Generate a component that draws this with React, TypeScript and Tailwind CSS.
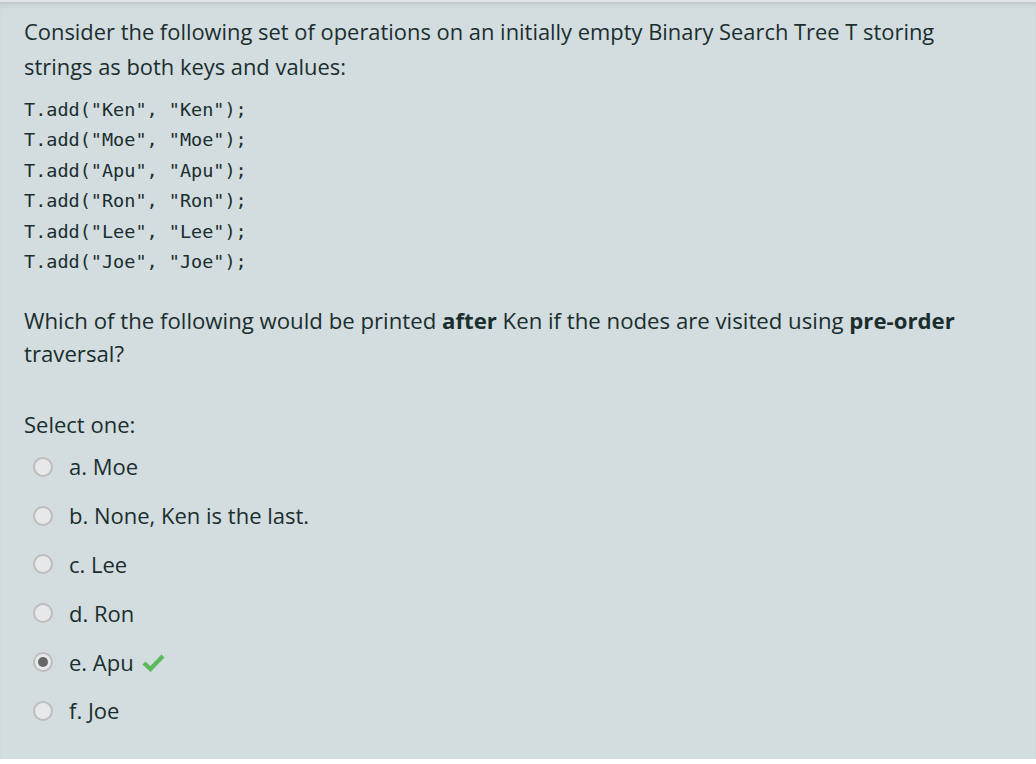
const codeLines = [
  'T.add("Ken", "Ken");',
  'T.add("Moe", "Moe");',
  'T.add("Apu", "Apu");',
  'T.add("Ron", "Ron");',
  'T.add("Lee", "Lee");',
  'T.add("Joe", "Joe");',
]

const options = [
  { label: "a. Moe" },
  { label: "b. None, Ken is the last." },
  { label: "c. Lee" },
  { label: "d. Ron" },
  { label: "e. Apu", checked: true },
  { label: "f. Joe" },
]

function Radio({ checked }: { checked?: boolean }) {
  return (
    <span className="w-[20px] h-[20px] rounded-full border-2 border-[#bdbdbd] bg-[#e6e8e9] flex items-center justify-center shrink-0">
      {checked && <span className="w-[10px] h-[10px] rounded-full bg-[#666]" />}
    </span>
  )
}

export default function App() {
  return (
    <div className="w-[1036px] h-[764px] bg-white flex flex-col">
      <div className="h-[2px] bg-[#e1e5e7]" />
      <div
        className="h-[757px] bg-[#d3dcdf] pl-[24px] pt-[12px] text-[#1a2e2e] shadow-[inset_0_5px_6px_-4px_rgba(0,0,0,0.15)]"
        style={{ fontFamily: '"Open Sans", "Noto Sans", sans-serif' }}
      >
        <p className="text-[21.9px] leading-[35px] w-[970px]">
          Consider the following set of operations on an initially empty Binary Search Tree T storing strings as both keys
          and values:
        </p>
        <div className="mt-[11px] font-['DejaVu_Sans_Mono',monospace] text-[18.5px] leading-[30.4px]">
          {codeLines.map((l) => (
            <div key={l} className="whitespace-pre">
              {l}
            </div>
          ))}
        </div>
        <p className="mt-[27px] text-[22.2px] leading-[33px] w-[970px]">
          Which of the following would be printed <b>after</b> Ken if the nodes are visited using <b>pre-order</b>{" "}
          traversal?
        </p>
        <div className="mt-[38px] text-[22px] leading-[33px]">Select one:</div>
        <div className="mt-[1px] flex flex-col">
          {options.map((o) => (
            <div key={o.label} className="h-[48.8px] flex items-center pl-[9px] gap-[16px] text-[22px]">
              <Radio checked={o.checked} />
              <span className="flex items-center gap-[8px]">
                {o.label}
                {o.checked && (
                  <svg width="23" height="19" viewBox="0 0 23 19">
                    <path d="M2 10 L8.5 16 L21 3" fill="none" stroke="#5cb85c" strokeWidth="4.2" />
                  </svg>
                )}
              </span>
            </div>
          ))}
        </div>
      </div>
    </div>
  )
}
